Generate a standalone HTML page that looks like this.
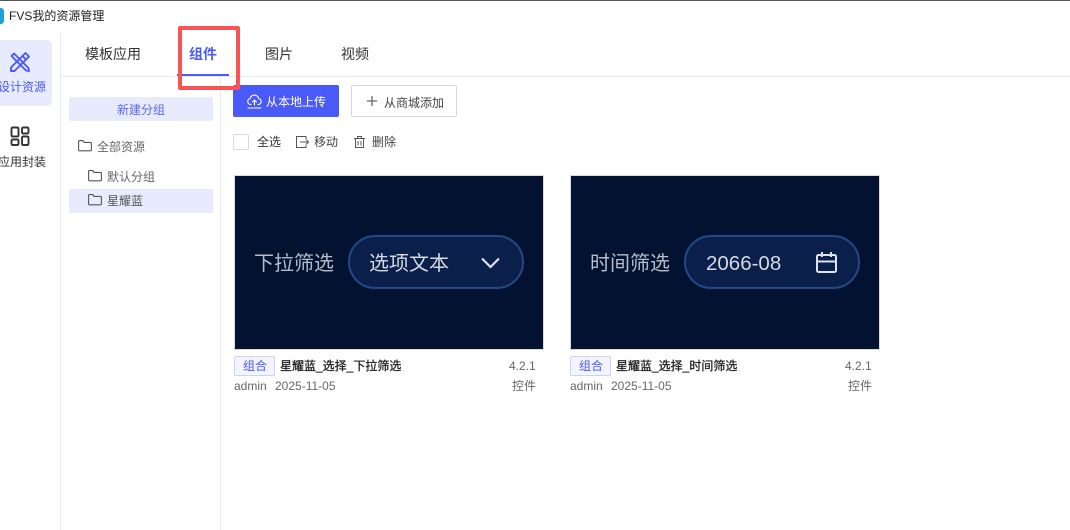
<!DOCTYPE html>
<html lang="zh">
<head>
<meta charset="utf-8">
<style>
html,body{margin:0;padding:0;background:#fff;}
body{width:1070px;height:530px;overflow:hidden;position:relative;font-family:"Liberation Sans","Noto Sans CJK SC",sans-serif;color:#333;}
.a{position:absolute;white-space:nowrap;}
.t{line-height:1;}
svg{position:absolute;overflow:visible;}
</style>
</head>
<body>
<div class="a" style="left:0;top:0;width:1070px;height:1px;background:#555"></div>
<div class="a" style="left:-6px;top:8px;width:10px;height:16px;background:#1ea0d8;border-radius:3px"></div>
<div class="a t" style="left:9px;top:10px;font-size:12px;color:#222">FVS我的资源管理</div>

<div class="a" style="left:60px;top:32px;width:1px;height:498px;background:#e6e8ee"></div>
<div class="a" style="left:61px;top:76px;width:1009px;height:1px;background:#e6e8ee"></div>
<div class="a" style="left:220px;top:77px;width:1px;height:453px;background:#e6e8ee"></div>

<div class="a" style="left:-10px;top:40px;width:62px;height:66px;background:#e7ebfd;border-radius:5px"></div>
<svg style="left:9px;top:51px" width="22" height="22" viewBox="0 0 22 22" fill="none" stroke="#4a5af5" stroke-width="1.9" stroke-linejoin="round" stroke-linecap="round">
<path d="M5 2.5L2.5 5L17 19.5L20 20L19.5 17Z"/>
<path d="M16.5 2L20 5.5L5.5 20L2 20L2 16.5Z"/>
<path d="M13.5 5L17 8.5"/>
</svg>
<div class="a t" style="left:-2px;top:81px;font-size:12px;color:#4a5af5">设计资源</div>
<svg style="left:10px;top:126px" width="20" height="20" viewBox="0 0 20 20" fill="none" stroke="#333" stroke-width="1.9">
<rect x="1.5" y="1.5" width="7" height="9" rx="1.2"/>
<rect x="12" y="1.5" width="6.5" height="6" rx="1.2"/>
<rect x="1.5" y="13.5" width="7" height="5.5" rx="1.2"/>
<rect x="12" y="10.5" width="6.5" height="8.5" rx="1.2"/>
</svg>
<div class="a t" style="left:-2px;top:156px;font-size:12px;color:#333">应用封装</div>

<div class="a t" style="left:85px;top:47px;font-size:14px;color:#333">模板应用</div>
<div class="a t" style="left:189px;top:47px;font-size:14px;color:#4a5af5;font-weight:bold">组件</div>
<div class="a t" style="left:265px;top:47px;font-size:14px;color:#333">图片</div>
<div class="a t" style="left:341px;top:47px;font-size:14px;color:#333">视频</div>
<div class="a" style="left:177px;top:74px;width:52px;height:2px;background:#4a5af5"></div>

<div class="a" style="left:69px;top:97px;width:144px;height:24px;background:#e7ebfd;border-radius:2px"></div>
<div class="a t" style="left:117px;top:104px;font-size:12px;color:#5a68f5">新建分组</div>

<svg style="left:78px;top:140px" width="14" height="12" viewBox="0 0 14 12" fill="none" stroke="#555" stroke-width="1.1"><path d="M.6 1.6q0-1 1-1h3.2l1.4 1.8h6.2q1 0 1 1v6.4q0 1-1 1H1.6q-1 0-1-1Z"/></svg>
<div class="a t" style="left:97px;top:141px;font-size:12px;color:#666">全部资源</div>
<svg style="left:88px;top:170px" width="14" height="12" viewBox="0 0 14 12" fill="none" stroke="#555" stroke-width="1.1"><path d="M.6 1.6q0-1 1-1h3.2l1.4 1.8h6.2q1 0 1 1v6.4q0 1-1 1H1.6q-1 0-1-1Z"/></svg>
<div class="a t" style="left:107px;top:171px;font-size:12px;color:#666">默认分组</div>
<div class="a" style="left:69px;top:189px;width:144px;height:24px;background:#e7ebfd"></div>
<svg style="left:88px;top:194px" width="14" height="12" viewBox="0 0 14 12" fill="none" stroke="#555" stroke-width="1.1"><path d="M.6 1.6q0-1 1-1h3.2l1.4 1.8h6.2q1 0 1 1v6.4q0 1-1 1H1.6q-1 0-1-1Z"/></svg>
<div class="a t" style="left:107px;top:195px;font-size:12px;color:#555">星耀蓝</div>

<div class="a" style="left:233px;top:85px;width:106px;height:32px;background:#4a5af8;border-radius:2px"></div>
<svg style="left:247px;top:94px" width="15" height="15" viewBox="0 0 15 15" fill="none" stroke="#fff" stroke-width="1.1" stroke-linecap="round" stroke-linejoin="round">
<path d="M4 10.5H3.5A3 3 0 0 1 3 4.6A4.5 4.5 0 0 1 11.8 4.6A3 3 0 0 1 11.5 10.5H11"/>
<path d="M7.5 11V6M5.5 8L7.5 6L9.5 8"/>
<path d="M1 14H14"/>
</svg>
<div class="a t" style="left:266px;top:96px;font-size:12px;color:#fff">从本地上传</div>

<div class="a" style="left:351px;top:85px;width:104px;height:30px;border:1px solid #d8d8d8;border-radius:2px"></div>
<svg style="left:367px;top:96px" width="10" height="10" viewBox="0 0 10 10" stroke="#666" stroke-width="1.3" fill="none"><path d="M5 0V10M0 5H10"/></svg>
<div class="a t" style="left:384px;top:97px;font-size:12px;color:#444">从商城添加</div>

<div class="a" style="left:233px;top:134px;width:14px;height:14px;border:1px solid #d8d8d8;border-radius:2px"></div>
<div class="a t" style="left:257px;top:136px;font-size:12px;color:#333">全选</div>
<svg style="left:296px;top:136px" width="13" height="12" viewBox="0 0 13 12" fill="none" stroke="#555" stroke-width="1"><path d="M10 3V.5H.5V11.5H10V9"/><path d="M4 6H12.5M10 3.5L12.5 6L10 8.5"/></svg>
<div class="a t" style="left:314px;top:136px;font-size:12px;color:#444">移动</div>
<svg style="left:354px;top:136px" width="11" height="12" viewBox="0 0 11 12" fill="none" stroke="#555" stroke-width="1"><path d="M0 2.5H11M3.5 2.5V.5H7.5V2.5M1.5 2.5V11.5H9.5V2.5M4 5V9.5M7 5V9.5"/></svg>
<div class="a t" style="left:372px;top:136px;font-size:12px;color:#444">删除</div>

<!-- Card 1 -->
<div class="a" style="left:234px;top:175px;width:308px;height:173px;background:#031231;border:1px solid #d9dce3"></div>
<div class="a t" style="left:254px;top:254px;font-size:20px;color:#b6bdc9">下拉筛选</div>
<div class="a" style="left:348px;top:235px;width:172px;height:50px;background:#0a1f4a;border:2px solid #234a86;border-radius:27px"></div>
<div class="a t" style="left:369px;top:254px;font-size:20px;color:#d5d9e0">选项文本</div>
<svg style="left:481px;top:257px" width="19" height="12" viewBox="0 0 19 12" fill="none" stroke="#dfe2e8" stroke-width="2.2"><path d="M1 1.5L9.5 10L18 1.5"/></svg>
<div class="a" style="left:234px;top:356px;width:39px;height:18px;background:#f2f5ff;border:1px solid #c9d2fb;border-radius:2px"></div>
<div class="a t" style="left:243px;top:360px;font-size:12px;color:#4a5af5">组合</div>
<div class="a t" style="left:280px;top:360px;font-size:12px;color:#222;-webkit-text-stroke:.3px #222">星耀蓝_选择_下拉筛选</div>
<div class="a t" style="left:509px;top:360px;font-size:12px;color:#666">4.2.1</div>
<div class="a t" style="left:234px;top:380px;font-size:12px;color:#666">admin</div>
<div class="a t" style="left:275px;top:380px;font-size:12px;color:#666">2025-11-05</div>
<div class="a t" style="left:512px;top:380px;font-size:12px;color:#666">控件</div>

<!-- Card 2 -->
<div class="a" style="left:570px;top:175px;width:308px;height:173px;background:#031231;border:1px solid #d9dce3"></div>
<div class="a t" style="left:590px;top:254px;font-size:20px;color:#b6bdc9">时间筛选</div>
<div class="a" style="left:684px;top:235px;width:172px;height:50px;background:#0a1f4a;border:2px solid #234a86;border-radius:27px"></div>
<div class="a t" style="left:706px;top:254px;font-size:20.5px;color:#d5d9e0">2066-08</div>
<svg style="left:816px;top:252px" width="21" height="21" viewBox="0 0 21 21" fill="none" stroke="#dfe2e8" stroke-width="2"><rect x="1" y="3" width="19" height="17" rx="1.5"/><path d="M1 9.5H20M6 0V5M15 0V5"/></svg>
<div class="a" style="left:570px;top:356px;width:39px;height:18px;background:#f2f5ff;border:1px solid #c9d2fb;border-radius:2px"></div>
<div class="a t" style="left:579px;top:360px;font-size:12px;color:#4a5af5">组合</div>
<div class="a t" style="left:616px;top:360px;font-size:12px;color:#222;-webkit-text-stroke:.3px #222">星耀蓝_选择_时间筛选</div>
<div class="a t" style="left:845px;top:360px;font-size:12px;color:#666">4.2.1</div>
<div class="a t" style="left:570px;top:380px;font-size:12px;color:#666">admin</div>
<div class="a t" style="left:611px;top:380px;font-size:12px;color:#666">2025-11-05</div>
<div class="a t" style="left:848px;top:380px;font-size:12px;color:#666">控件</div>

<!-- Red highlight -->
<div class="a" style="left:178px;top:26px;width:62px;height:64px;box-sizing:border-box;border:4px solid #f95355;border-radius:2px"></div>
</body>
</html>
